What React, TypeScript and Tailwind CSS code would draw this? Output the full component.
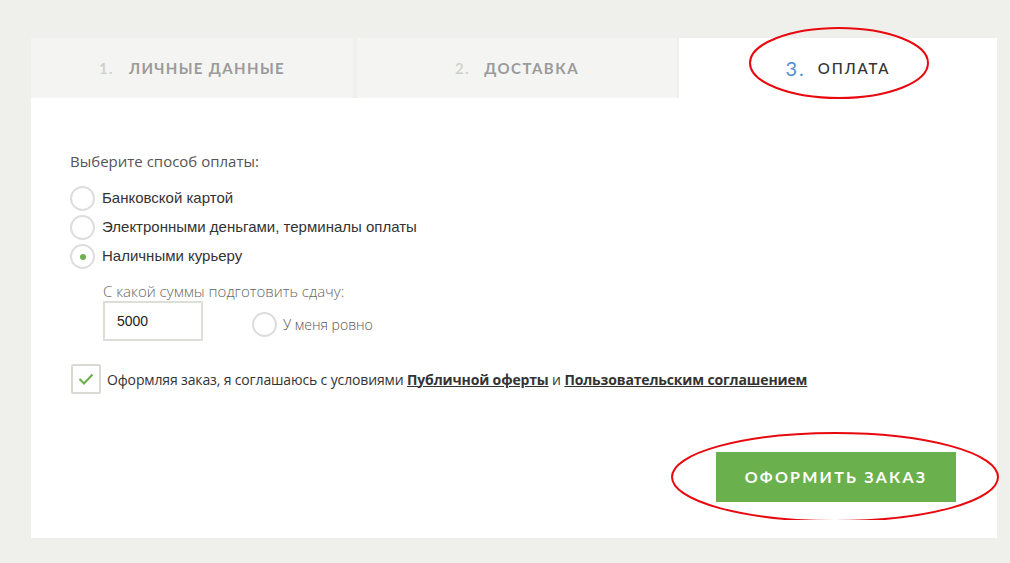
import React from 'react';

function Radio({ checked = false }: { checked?: boolean }) {
  return (
    <span className="flex h-[25px] w-[25px] shrink-0 items-center justify-center rounded-full border-2 border-[#dcdedb] bg-white">
      {checked && <span className="h-[6px] w-[6px] rounded-full bg-[#6ab04c]" />}
    </span>
  );
}

const methods = [
  { label: 'Банковской картой', checked: false },
  { label: 'Электронными деньгами, терминалы оплаты', checked: false },
  { label: 'Наличными курьеру', checked: true },
];

export default function App() {
  return (
    <div className="min-h-[563px] w-[1010px] bg-[#eff0eb] pt-[38px] pl-[31px]" style={{ fontFamily: '"Liberation Sans", Arial, sans-serif' }}>
      <div className="relative w-[966px] bg-white">
        {/* tabs */}
        <div className="flex h-[60px] bg-[#eff0eb]">
          <div className="flex w-[322px] items-center justify-center gap-[15px] bg-[#f4f4f2] text-[15px] tracking-[0.09em]" style={{ fontFamily: 'Lato, sans-serif' }}>
            <span className="text-[#ccd1c8] font-semibold">1.</span>
            <span className="font-bold text-[#9b9b9b]">ЛИЧНЫЕ ДАННЫЕ</span>
          </div>
          <div className="ml-[4px] flex w-[320px] items-center justify-center gap-[14px] bg-[#f4f4f2] text-[15px] tracking-[0.1em]" style={{ fontFamily: 'Lato, sans-serif' }}>
            <span className="text-[#ccd1c8] font-semibold">2.</span>
            <span className="font-bold text-[#9b9b9b]">ДОСТАВКА</span>
          </div>
          <div className="ml-[2px] flex flex-1 items-center justify-center gap-[12px] bg-white tracking-[0.12em]" style={{ fontFamily: 'Lato, sans-serif' }}>
            <span className="text-[20px] text-[#4f8fcf]">3.</span>
            <span className="text-[15px] font-medium text-[#333]">ОПЛАТА</span>
          </div>
        </div>

        {/* body */}
        <div className="h-[440px] px-[39px] pt-[54px]">
          <div className="text-[15px] leading-[18px] text-[#555]" style={{ fontFamily: '"Open Sans", sans-serif' }}>Выберите способ оплаты:</div>
          <div className="mt-[16px] flex flex-col gap-[4px]">
            {methods.map((m) => (
              <label key={m.label} className="flex h-[25px] items-center gap-[7px] text-[15px] text-[#333]">
                <Radio checked={m.checked} />
                {m.label}
              </label>
            ))}
          </div>

          <div className="ml-[33px] mt-[13px]">
            <div className="text-[15px] leading-[18px] text-[#666]" style={{ fontFamily: '"Open Sans", sans-serif', fontWeight: 300 }}>С какой суммы подготовить сдачу:</div>
            <div className="mt-[1px] flex items-center">
              <div className="flex h-[40px] w-[100px] items-center border-2 border-[#dcdfd8] pl-[12px] text-[14px] text-[#222]">5000</div>
              <label className="ml-[49px] mt-[7px] flex items-center gap-[6px] text-[14px] font-light text-[#555]" style={{ fontFamily: '"Open Sans", sans-serif' }}>
                <Radio />
                У меня ровно
              </label>
            </div>
          </div>

          <div className="mt-[23px] flex items-center gap-[6px] pl-[1px] text-[14px] text-[#333]" style={{ fontFamily: '"Open Sans", sans-serif' }}>
            <span className="flex h-[30px] w-[30px] items-center justify-center rounded-[2px] border-2 border-[#d8dbd4] bg-white">
              <svg width="16" height="12" viewBox="0 0 16 12" fill="none">
                <path d="M1.5 6 L6 10.5 L14.5 1.5" stroke="#6ab04c" strokeWidth="2" />
              </svg>
            </span>
            <span className="tracking-[-0.01em]">
              Оформляя заказ, я соглашаюсь с условиями{' '}
              <a className="font-bold text-[#333] underline">Публичной оферты</a> и{' '}
              <a className="font-bold text-[#333] underline">Пользовательским соглашением</a>
            </span>
          </div>

          <div className="mt-[58px] flex justify-end pr-[2px]">
            <button className="h-[50px] w-[240px] bg-[#6ab04c] text-[16px] font-bold tracking-[0.14em] text-white" style={{ fontFamily: 'Lato, sans-serif' }}>
              ОФОРМИТЬ ЗАКАЗ
            </button>
          </div>
        </div>

        {/* red annotation ellipses */}
        <svg className="pointer-events-none absolute left-0 top-0" width="1000" height="520" viewBox="0 0 1000 520" style={{ marginLeft: -31, marginTop: -38 }} fill="none">
          <ellipse cx="839" cy="63" rx="89" ry="35" stroke="#e8090f" strokeWidth="2" />
          <ellipse cx="835" cy="477" rx="163" ry="44" stroke="#e8090f" strokeWidth="2" />
        </svg>
      </div>
    </div>
  );
}
